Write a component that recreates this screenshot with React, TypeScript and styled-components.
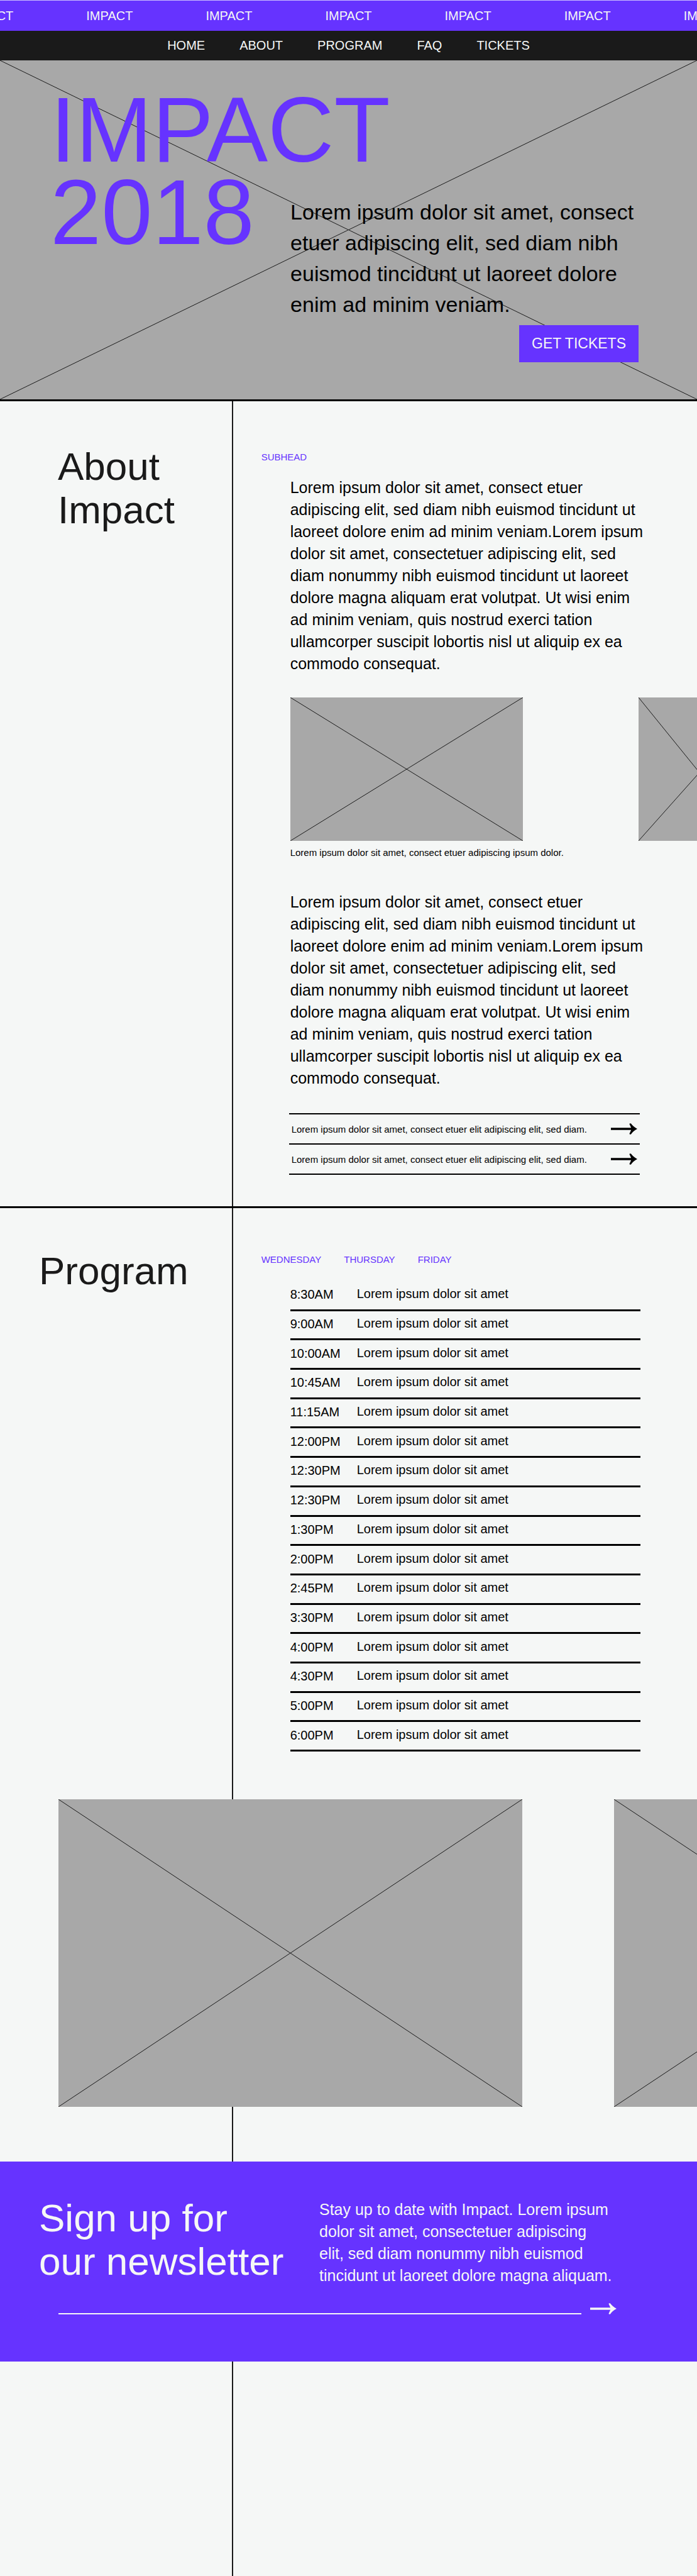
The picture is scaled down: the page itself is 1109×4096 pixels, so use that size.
import React from "react";
import styled, { createGlobalStyle } from "styled-components";

const color = {
  purple: "#6633ff",
  ink: "#1a1a1a",
  black: "#000000",
  paper: "#f5f7f6",
  grey: "#a8a8a8",
};

const GlobalStyle = createGlobalStyle`
  *, *::before, *::after { box-sizing: border-box; }
  body {
    margin: 0;
    background: ${color.paper};
    color: ${color.black};
    font-family: "Liberation Sans", Arial, sans-serif;
  }
  h1, h2, p, figure { margin: 0; font-weight: 400; }
`;

const Page = styled.div`
  overflow: hidden;
`;

const Ticker = styled.div`
  display: flex;
  justify-content: center;
  gap: 116px;
  height: 49px;
  line-height: 48px;
  overflow: hidden;
  border-top: 1px solid #c9bbff;
  background: ${color.purple};
  color: ${color.paper};
  font-size: 20px;
`;

const TickerWord = styled.span`
  flex: none;
`;

const Nav = styled.nav`
  display: flex;
  justify-content: center;
  gap: 55px;
  height: 47px;
  line-height: 46px;
  background: ${color.ink};
  font-size: 20px;
`;

const NavLink = styled.a`
  color: ${color.paper};
  text-decoration: none;
`;

const Placeholder = styled.svg`
  display: block;
  width: 100%;
  height: 100%;
  background: ${color.grey};
`;

const Hero = styled.header`
  display: grid;
  grid-template-columns: 5fr 7fr;
  height: 542px;
  border-bottom: 3px solid ${color.black};

  & > * { grid-row: 1; }
`;

const HeroBackdrop = styled.div`
  grid-column: 1 / -1;
  min-height: 0;
  height: 539px;
`;

const HeroTitle = styled.h1`
  grid-column: 1 / -1;
  padding: 45px 0 0 80px;
  color: ${color.purple};
  font-size: 146px;
  line-height: 131px;
`;

const HeroBody = styled.div`
  grid-column: 2;
  display: flex;
  flex-direction: column;
  align-items: flex-start;
  gap: 8px;
  padding: 217px 93px 0 0;
`;

const HeroText = styled.p`
  font-size: 34px;
  line-height: 49px;
`;

const TicketsButton = styled.button`
  align-self: flex-end;
  height: 59px;
  padding: 0 20px;
  border: 0;
  background: ${color.purple};
  color: ${color.paper};
  font: 23px "Liberation Sans", Arial, sans-serif;
`;

const Content = styled.main`
  background: linear-gradient(${color.ink}, ${color.ink}) calc(100% / 3) 0 / 2px 100% no-repeat;
`;

const Section = styled.section<{ $divider?: boolean }>`
  display: grid;
  grid-template-columns: 1fr 2fr;
  border-bottom: ${(p) => (p.$divider ? `3px solid ${color.black}` : "0")};
`;

const SectionTitle = styled.h2<{ $indent: number; $top: number }>`
  padding: ${(p) => p.$top}px 0 0 ${(p) => p.$indent}px;
  color: ${color.ink};
  font-size: 62px;
  line-height: 69px;
`;

const SectionBody = styled.div<{ $top: number }>`
  min-width: 0;
  padding: ${(p) => p.$top}px 0 0 46px;
`;

const Subheads = styled.div`
  display: flex;
  gap: 36px;
  font-size: 15px;
  line-height: 18px;
`;

const Subhead = styled.span`
  color: ${color.purple};
`;

const DayLink = styled.a`
  color: ${color.purple};
  text-decoration: none;
`;

const Column = styled.div<{ $top: number }>`
  padding: ${(p) => p.$top}px 0 0 46px;
`;

const BodyText = styled.p`
  max-width: 564px;
  font-size: 25px;
  line-height: 35px;
`;

const Gallery = styled.div`
  display: flex;
  gap: 184px;
  margin-top: 36px;
  overflow: hidden;
`;

const GalleryImage = styled.div<{ $width: number }>`
  flex: none;
  width: ${(p) => p.$width}px;
  height: 228px;
`;

const Caption = styled.figcaption`
  padding: 10px 0 52px;
  font-size: 15px;
  line-height: 18px;
`;

const LinkList = styled.div`
  width: 558px;
  margin: 38px 0 50px -2px;
  border-top: 2px solid ${color.black};
`;

const LinkRow = styled.a`
  display: flex;
  align-items: center;
  justify-content: space-between;
  height: 48px;
  padding: 0 4px;
  border-bottom: 2px solid ${color.black};
  color: ${color.black};
  font-size: 15px;
  text-decoration: none;
`;

const Schedule = styled.table`
  width: 557px;
  height: 747px;
  border-collapse: separate;
  border-spacing: 0;
  font-size: 20px;
  line-height: 23px;

  th, td {
    padding: 0 0 4px;
    border-bottom: 3px solid ${color.black};
    font-weight: 400;
    text-align: left;
    vertical-align: middle;
  }
  th {
    width: 106px;
    padding-bottom: 2px;
  }
`;

const WideGallery = styled.div`
  display: flex;
  gap: 146px;
  padding: 76px 0 87px 93px;
  overflow: hidden;
`;

const WideImage = styled.div`
  flex: none;
  width: 738px;
  height: 489px;
`;

const Newsletter = styled.section`
  height: 318px;
  padding: 55px 128px 0 62px;
  background: ${color.purple};
  color: ${color.paper};
`;

const NewsletterIntro = styled.div`
  display: grid;
  grid-template-columns: 446px 1fr;
`;

const NewsletterTitle = styled.h2`
  font-size: 62px;
  line-height: 69px;
`;

const NewsletterText = styled.p`
  padding-top: 4px;
  font-size: 25px;
  line-height: 35px;
  white-space: nowrap;
`;

const SignupForm = styled.form`
  display: flex;
  gap: 14px;
  padding-left: 31px;
`;

const EmailInput = styled.input`
  flex: 1;
  min-width: 0;
  height: 44px;
  padding: 0;
  border: 0;
  border-bottom: 2px solid ${color.paper};
  border-radius: 0;
  outline: 0;
  background: transparent;
  color: ${color.paper};
  font: 25px "Liberation Sans", Arial, sans-serif;
`;

const SubmitButton = styled.button`
  display: flex;
  align-items: flex-end;
  padding: 0;
  border: 0;
  background: transparent;
  color: ${color.paper};
`;

const Footer = styled.footer`
  height: 341px;
`;

function CrossedImage({ rise = 0 }: { rise?: number }) {
  return (
    <Placeholder viewBox="0 0 100 100" preserveAspectRatio="none" aria-hidden="true">
      <path d={`M0 0L100 100M0 100L100 ${rise}`} fill="none" stroke="#1a1a1a" vectorEffect="non-scaling-stroke" />
    </Placeholder>
  );
}

function Arrow() {
  return (
    <svg width="42" height="18" viewBox="0 0 42 18" fill="currentColor" aria-hidden="true">
      <path d="M0 7.3H32.2L29.4 1Q30.5 -0.3 32 0.6Q35.5 5.6 42 9Q35.5 12.4 32 17.4Q30.5 18.3 29.4 17L32.2 10.7H0Z" />
    </svg>
  );
}

const copy =
  "Lorem ipsum dolor sit amet, consect etuer adipiscing elit, sed diam nibh euismod tincidunt ut laoreet dolore enim ad minim veniam.Lorem ipsum dolor sit amet, consectetuer adipiscing elit, sed diam nonummy nibh euismod tincidunt ut laoreet dolore magna aliquam erat volutpat. Ut wisi enim ad minim veniam, quis nostrud exerci tation ullamcorper suscipit lobortis nisl ut aliquip ex ea commodo consequat.";

const times = [
  "8:30AM", "9:00AM", "10:00AM", "10:45AM", "11:15AM", "12:00PM", "12:30PM", "12:30PM",
  "1:30PM", "2:00PM", "2:45PM", "3:30PM", "4:00PM", "4:30PM", "5:00PM", "6:00PM",
];

export default function App() {
  return (
    <Page>
      <GlobalStyle />
      <Ticker>
        {Array.from({ length: 7 }, (_, i) => (
          <TickerWord key={i}>IMPACT</TickerWord>
        ))}
      </Ticker>
      <Nav>
        {["HOME", "ABOUT", "PROGRAM", "FAQ", "TICKETS"].map((item) => (
          <NavLink key={item} href={`#${item.toLowerCase()}`}>{item}</NavLink>
        ))}
      </Nav>
      <Hero id="home">
        <HeroBackdrop><CrossedImage /></HeroBackdrop>
        <HeroTitle>IMPACT<br />2018</HeroTitle>
        <HeroBody>
          <HeroText>
            Lorem ipsum dolor sit amet, consect etuer adipiscing elit, sed diam nibh euismod tincidunt ut
            laoreet dolore enim ad minim veniam.
          </HeroText>
          <TicketsButton type="button">GET TICKETS</TicketsButton>
        </HeroBody>
      </Hero>
      <Content>
        <Section id="about" $divider>
          <SectionTitle $top={69} $indent={92}>About<br />Impact</SectionTitle>
          <SectionBody $top={80}>
            <Subheads><Subhead>SUBHEAD</Subhead></Subheads>
            <Column $top={22}>
              <BodyText>{copy}</BodyText>
              <figure>
                <Gallery>
                  <GalleryImage $width={370}><CrossedImage /></GalleryImage>
                  <GalleryImage $width={185}><CrossedImage rise={9} /></GalleryImage>
                </Gallery>
                <Caption>Lorem ipsum dolor sit amet, consect etuer adipiscing ipsum dolor.</Caption>
              </figure>
              <BodyText>{copy}</BodyText>
              <LinkList>
                {[1, 2].map((n) => (
                  <LinkRow key={n} href={`#story-${n}`}>
                    Lorem ipsum dolor sit amet, consect etuer elit adipiscing elit, sed diam.
                    <Arrow />
                  </LinkRow>
                ))}
              </LinkList>
            </Column>
          </SectionBody>
        </Section>
        <Section id="program">
          <SectionTitle $top={65} $indent={62}>Program</SectionTitle>
          <SectionBody $top={73}>
            <Subheads>
              {["WEDNESDAY", "THURSDAY", "FRIDAY"].map((day) => (
                <DayLink key={day} href={`#${day.toLowerCase()}`}>{day}</DayLink>
              ))}
            </Subheads>
            <Column $top={26}>
              <Schedule>
                <tbody>
                  {times.map((time, i) => (
                    <tr key={i}>
                      <th scope="row">{time}</th>
                      <td>Lorem ipsum dolor sit amet</td>
                    </tr>
                  ))}
                </tbody>
              </Schedule>
            </Column>
          </SectionBody>
        </Section>
        <WideGallery>
          <WideImage><CrossedImage /></WideImage>
          <WideImage><CrossedImage /></WideImage>
        </WideGallery>
        <Newsletter>
          <NewsletterIntro>
            <NewsletterTitle>Sign up for<br />our newsletter</NewsletterTitle>
            <NewsletterText>
              Stay up to date with Impact. Lorem ipsum<br />
              dolor sit amet, consectetuer adipiscing<br />
              elit, sed diam nonummy nibh euismod<br />
              tincidunt ut laoreet dolore magna aliquam.
            </NewsletterText>
          </NewsletterIntro>
          <SignupForm onSubmit={(e) => e.preventDefault()}>
            <EmailInput type="email" aria-label="Email address" />
            <SubmitButton type="submit" aria-label="Sign up"><Arrow /></SubmitButton>
          </SignupForm>
        </Newsletter>
        <Footer />
      </Content>
    </Page>
  );
}
